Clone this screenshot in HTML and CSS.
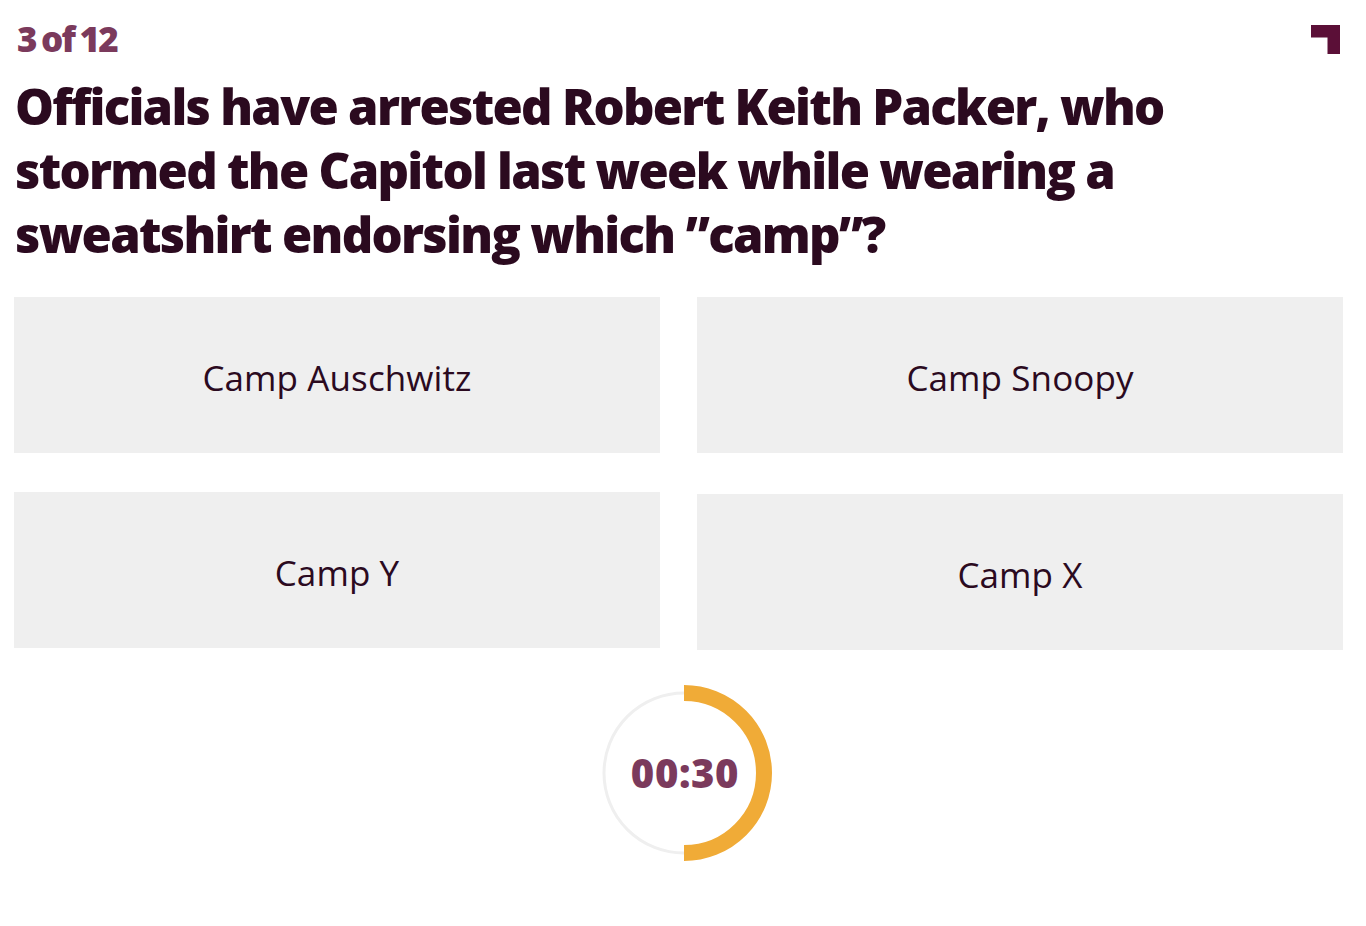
FILE: index.html
```html
<!DOCTYPE html>
<html lang="en">
<head>
<meta charset="utf-8">
<title>Quiz</title>
<link rel="stylesheet" href="styles.css">
</head>
<body>
<main class="quiz">
  <header class="quiz-head">
    <span class="counter">3 of 12</span>
    <svg class="logo" width="29" height="29" viewBox="0 0 29 29" aria-hidden="true">
      <path d="M0 0H29V29H16.5V12.5H0Z" fill="#5b0f37"/>
    </svg>
  </header>
  <h1 class="question">Officials have arrested Robert Keith Packer, who stormed the Capitol last week while wearing a sweatshirt endorsing which ”camp”?</h1>
  <div class="answers">
    <button class="answer">Camp Auschwitz</button>
    <button class="answer">Camp Snoopy</button>
    <button class="answer">Camp Y</button>
    <button class="answer answer-shift">Camp X</button>
  </div>
  <div class="timer">
    <svg class="timer-ring" width="180" height="180" viewBox="0 0 180 180" aria-hidden="true">
      <circle cx="90" cy="90" r="80" fill="none" stroke="#efefef" stroke-width="3"/>
      <path d="M90 10A80 80 0 0 1 90 170" fill="none" stroke="#f0ab37" stroke-width="16"/>
    </svg>
    <span class="timer-text">00:30</span>
  </div>
</main>
</body>
</html>
```

FILE: styles.css
```css
* { box-sizing: border-box; }
html, body { margin: 0; padding: 0; background: #ffffff; }
body { font-family: "Open Sans", "Noto Sans", sans-serif; color: #2b0a1f; }

.quiz {
  width: 1366px;
  padding: 14px 23px 0 14px;
}

.quiz-head {
  display: flex;
  justify-content: space-between;
  align-items: flex-start;
  height: 50px;
  padding-right: 3px;
}

.counter {
  display: block;
  margin-left: 3px;
  margin-top: 1px;
  font-size: 35px;
  line-height: 48px;
  font-weight: 800;
  letter-spacing: -1.8px;
  word-spacing: -2px;
  color: #7b3a5c;
}

.logo { display: block; margin-top: 11px; }

.question {
  margin: 10px 0 0 1px;
  font-size: 49px;
  line-height: 64px;
  font-weight: 800;
  letter-spacing: -1.7px;
  color: #2b0a1f;
  max-width: 1200px;
}

.answers {
  display: grid;
  grid-template-columns: 1fr 1fr;
  column-gap: 37px;
  row-gap: 39px;
  margin-top: 31px;
}

.answer {
  height: 156px;
  border: 0;
  margin: 0;
  background: #efefef;
  font-family: "Open Sans", "Noto Sans", sans-serif;
  font-size: 35px;
  font-weight: 400;
  color: #2b0a1f;
  letter-spacing: 0.1px;
  padding: 4px 0 0;
}

.answer-shift { transform: translateY(2px); }

.timer {
  position: relative;
  width: 180px;
  height: 180px;
  margin: 35px auto 0;
  left: 5px;
}

.timer-ring { display: block; }

.timer-text {
  position: absolute;
  inset: 0;
  display: flex;
  align-items: center;
  justify-content: center;
  font-size: 40px;
  font-weight: 800;
  color: #7b3a5c;
  letter-spacing: 0.6px;
  padding-left: 3px;
  padding-bottom: 2px;
}
```
